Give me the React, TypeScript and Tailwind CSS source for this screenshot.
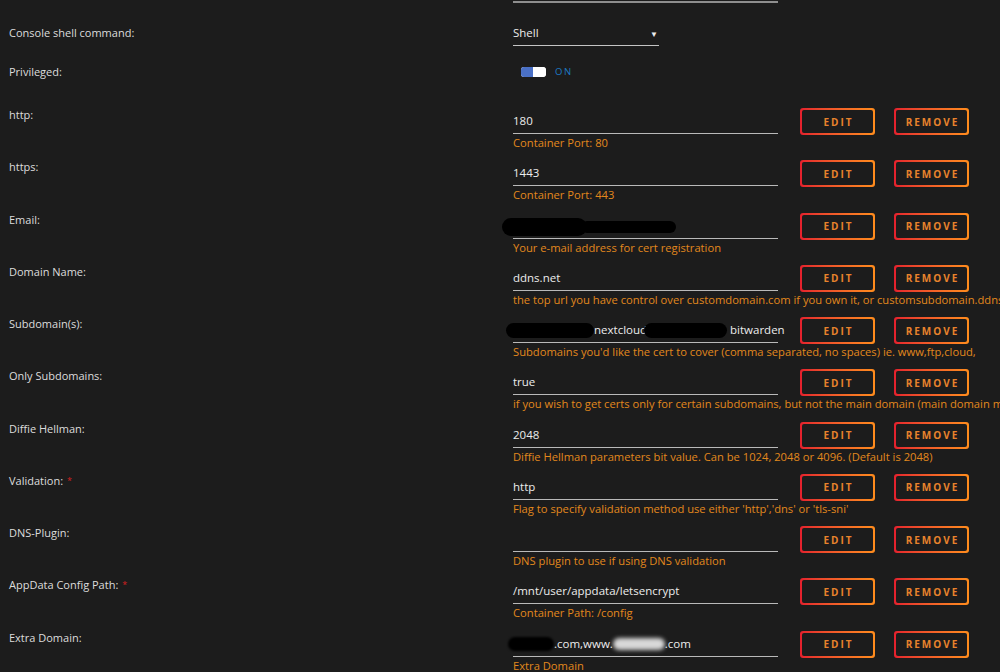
import React from 'react';

// --- TYPE DEFINITIONS ---
interface Field {
  label: string;
  required?: boolean;
  value: React.ReactNode;
  help: string;
}

const Blob = ({ w, h = 17, className = '' }: { w: number; h?: number; className?: string }) => (
  <span
    className={`inline-block align-middle rounded-full bg-black ${className}`}
    style={{ width: w, height: h }}
  />
);

// --- DATA ---
const fields: Field[] = [
  { label: 'http:', value: '180', help: 'Container Port: 80' },
  { label: 'https:', value: '1443', help: 'Container Port: 443' },
  {
    label: 'Email:',
    value: (
      <span className="relative -ml-[11px] flex items-center">
        <Blob w={85} h={18} />
        <Blob w={95} h={12} className="-ml-[6px]" />
      </span>
    ),
    help: 'Your e-mail address for cert registration',
  },
  {
    label: 'Domain Name:',
    value: 'ddns.net',
    help: "the top url you have control over customdomain.com if you own it, or customsubdomain.ddnsprovider.com if you don't own a domain",
  },
  {
    label: 'Subdomain(s):',
    value: (
      <span className="-ml-[7px] flex items-center">
        <Blob w={88} h={15} />
        <span>nextcloud</span>
        <Blob w={83} h={15} className="-ml-[3px]" />
        <span className="ml-[3px]">bitwarden</span>
      </span>
    ),
    help: "Subdomains you'd like the cert to cover (comma separated, no spaces) ie. www,ftp,cloud,",
  },
  {
    label: 'Only Subdomains:',
    value: 'true',
    help: 'if you wish to get certs only for certain subdomains, but not the main domain (main domain may be hosted on another machine)',
  },
  {
    label: 'Diffie Hellman:',
    value: '2048',
    help: 'Diffie Hellman parameters bit value. Can be 1024, 2048 or 4096. (Default is 2048)',
  },
  {
    label: 'Validation:',
    required: true,
    value: 'http',
    help: "Flag to specify validation method use either 'http','dns' or 'tls-sni'",
  },
  { label: 'DNS-Plugin:', value: '', help: 'DNS plugin to use if using DNS validation' },
  {
    label: 'AppData Config Path:',
    required: true,
    value: '/mnt/user/appdata/letsencrypt',
    help: 'Container Path: /config',
  },
  {
    label: 'Extra Domain:',
    value: (
      <span className="-ml-[5px] flex items-center">
        <Blob w={46} h={14} className="blur-[1px]" />
        <span>.com,www.</span>
        <span className="inline-block h-[12px] w-[52px] rounded-full bg-[#d8d8d8] blur-[2px]" />
        <span>.com</span>
      </span>
    ),
    help: 'Extra Domain',
  },
];

// --- SUB-COMPONENT: gradient outlined button ---
const ActionButton = ({ label }: { label: string }) => (
  <div className="h-[27px] w-[75px] rounded-[3px] bg-gradient-to-r from-[#e41f2d] to-[#ff8c1c] p-[2px]">
    <div className="flex h-full w-full items-center justify-center rounded-[2px] bg-[#1c1c1c] pl-[2px] text-[10px] font-bold tracking-[2px] text-[#e8832c]">
      {label}
    </div>
  </div>
);

const FieldRow = ({ field }: { field: Field }) => (
  <div className="flex h-[52.25px]">
    <div className="w-[504px] pt-[3px]">
      {field.label}
      {field.required && <span className="ml-[4px] align-top text-[9px] text-[#d42020]">*</span>}
    </div>
    <div className="w-[265px] pt-[9px]">
      <div className="flex h-[21px] items-start border-b border-[#b9b9b9] text-[11.5px] text-[#ececec]">
        {field.value}
      </div>
      <div className="whitespace-nowrap pt-[1px] text-[11.2px] leading-[16px] text-[#e2881c]">{field.help}</div>
    </div>
    <div className="ml-[22px] flex gap-[19px] pt-[4px]">
      <ActionButton label="EDIT" />
      <ActionButton label="REMOVE" />
    </div>
  </div>
);

// --- MAIN PAGE COMPONENT ---
export default function App() {
  return (
    <div
      className="h-[672px] w-[1000px] overflow-hidden bg-[#1c1c1c] pl-[9px] text-[11px] leading-[16px] text-[#dcdcdc]"
      style={{ fontFamily: '"Open Sans", "Noto Sans", sans-serif' }}
    >
      {/* remnant of the previous field */}
      <div className="flex h-[4px]">
        <div className="w-[504px]" />
        <div className="h-[3px] w-[265px] border-b-2 border-[#8e8e8e]" />
      </div>

      {/* Console shell command */}
      <div className="flex h-[52px]">
        <div className="w-[504px] pt-[21px]">Console shell command:</div>
        <div className="w-[146px] pt-[20px]">
          <div className="flex h-[22px] items-start justify-between border-b border-[#c4c4c4] text-[11.5px] text-[#ececec]">
            <span className="pt-[1px]">Shell</span>
            <span className="pr-[1px] pt-[2px] text-[8px]">▼</span>
          </div>
        </div>
      </div>

      {/* Privileged */}
      <div className="flex h-[48px]">
        <div className="w-[504px] pt-[8px]">Privileged:</div>
        <div className="flex items-start gap-[9px] pl-[8px] pt-[11px]">
          <div className="flex h-[10px] w-[25px] overflow-hidden rounded-[3px] bg-white">
            <div className="h-full w-[12px] bg-[#4a70c6]" />
            <div className="h-full flex-1 rounded-[3px] bg-white" />
          </div>
          <span className="-mt-[3px] text-[9.5px] tracking-[1.5px] text-[#1d7ac4]">ON</span>
        </div>
      </div>

      {fields.map((f) => (
        <FieldRow key={f.label} field={f} />
      ))}
    </div>
  );
}
